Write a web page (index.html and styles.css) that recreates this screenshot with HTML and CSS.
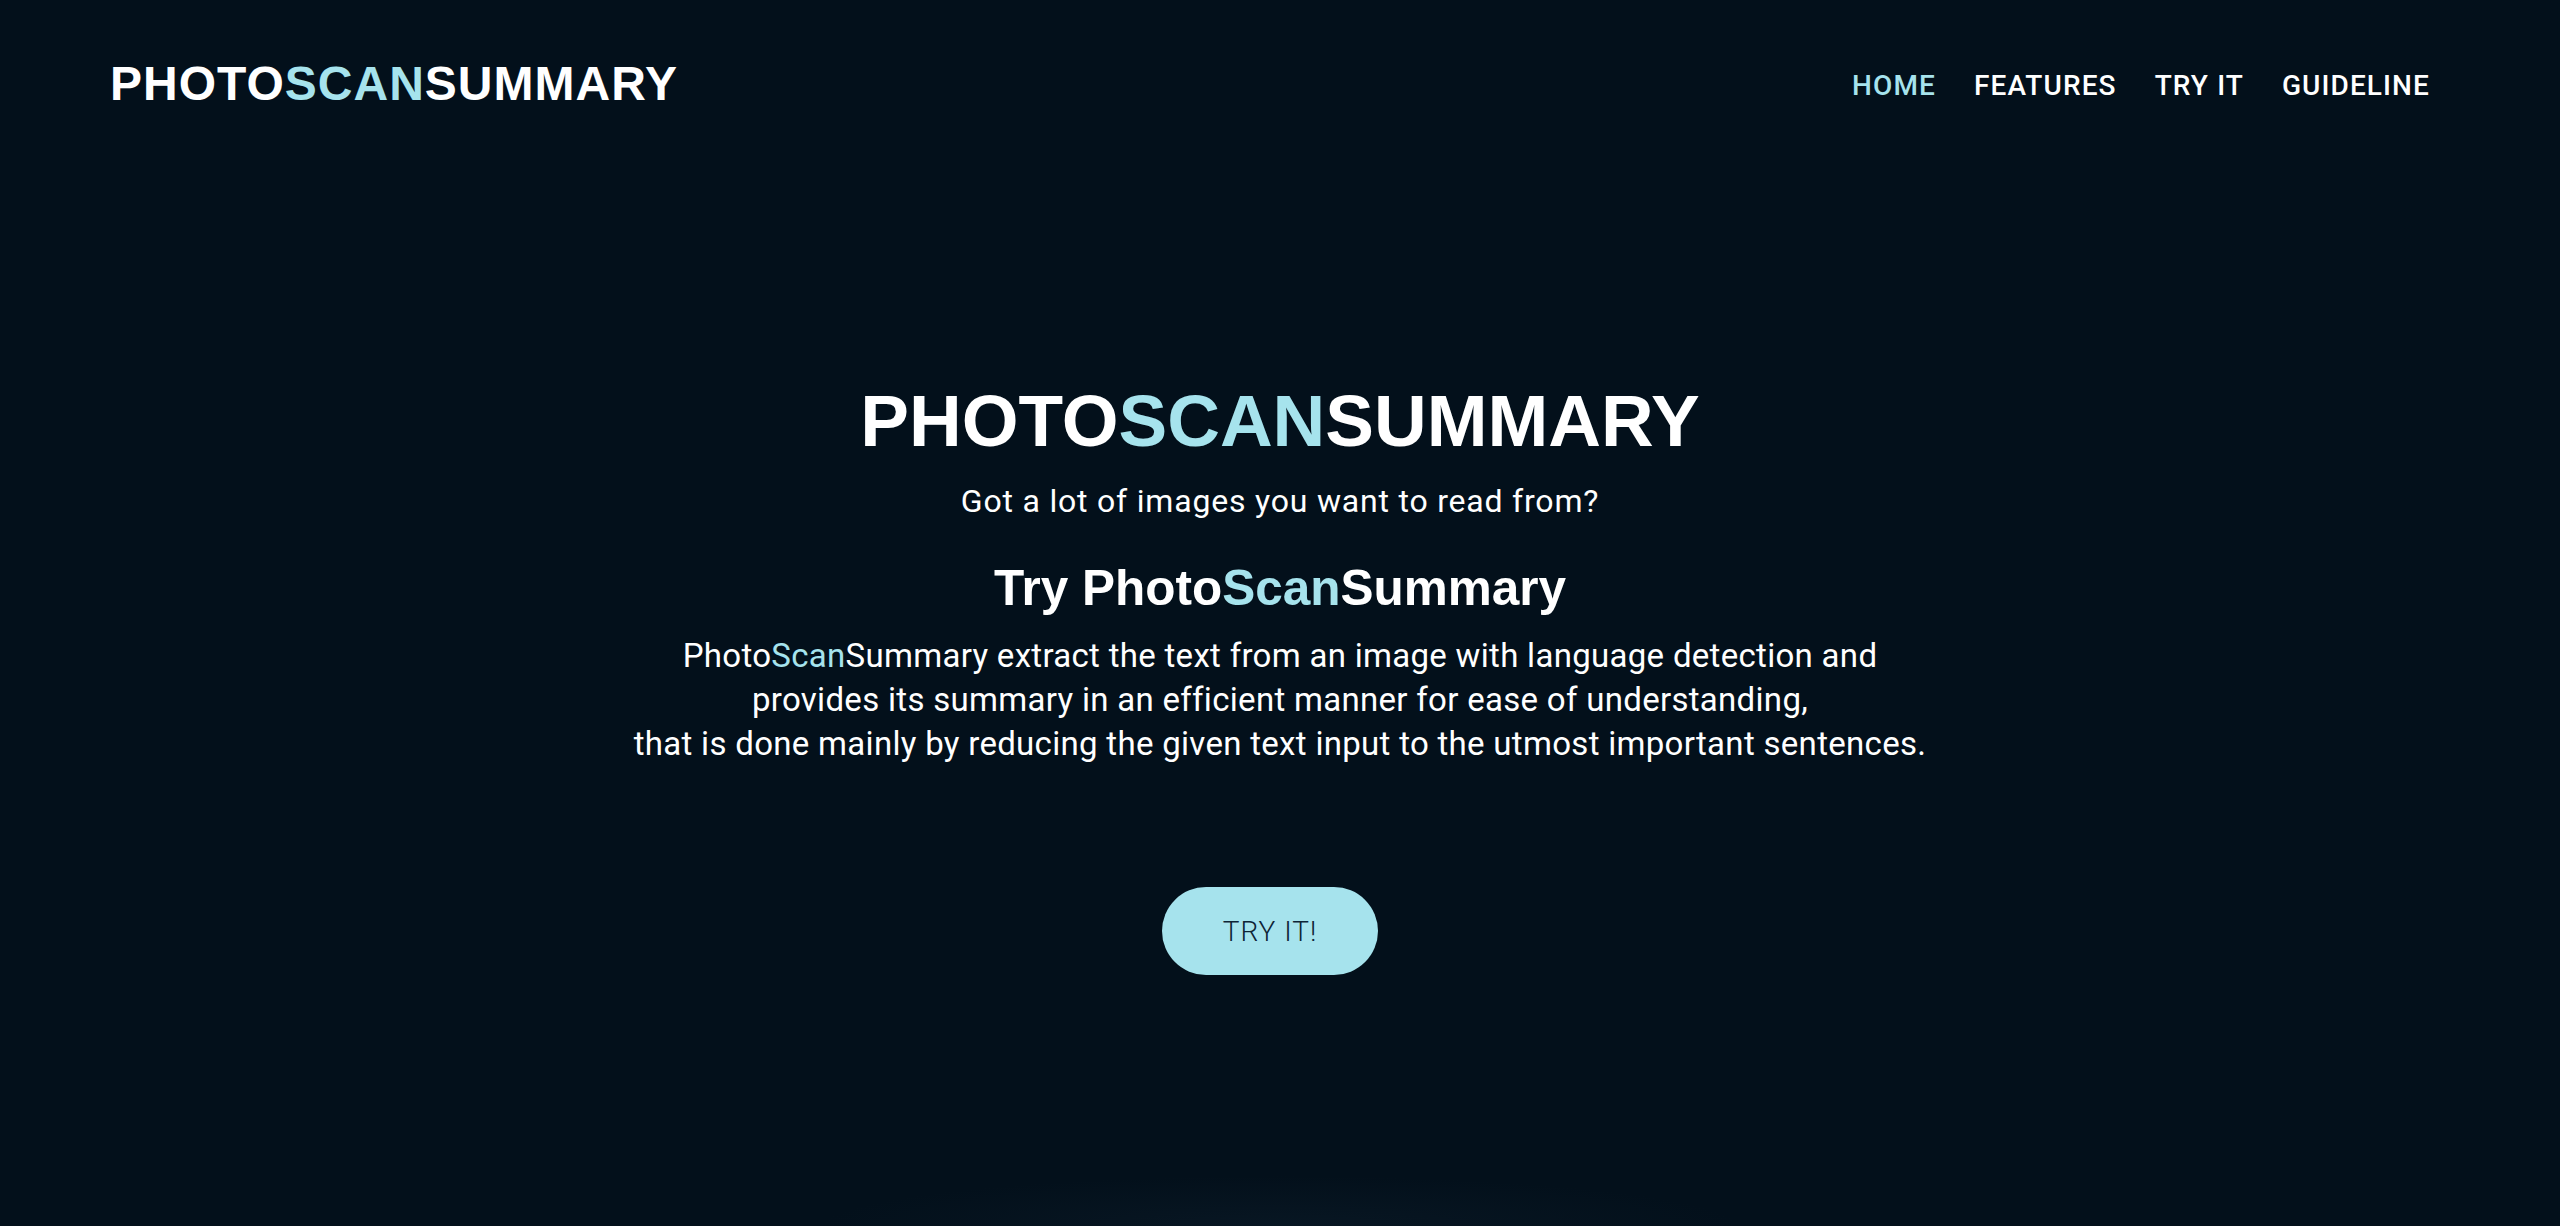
FILE: index.html
```html
<!DOCTYPE html>
<html lang="en">
<head>
<meta charset="utf-8">
<title>PhotoScanSummary</title>
<link rel="stylesheet" href="styles.css">
</head>
<body>
<div class="page">
  <header class="header">
    <a class="logo" href="#">PHOTO<span class="accent">SCAN</span>SUMMARY</a>
    <nav class="nav">
      <a class="nav-link active" href="#">HOME</a>
      <a class="nav-link" href="#">FEATURES</a>
      <a class="nav-link" href="#">TRY IT</a>
      <a class="nav-link" href="#">GUIDELINE</a>
    </nav>
  </header>
  <main class="hero">
    <h1 class="hero-title">PHOTO<span class="accent">SCAN</span>SUMMARY</h1>
    <p class="hero-sub">Got a lot of images you want to read from?</p>
    <h2 class="hero-heading">Try Photo<span class="accent">Scan</span>Summary</h2>
    <p class="hero-text">Photo<span class="accent">Scan</span>Summary extract the text from an image with language detection and<br>provides its summary in an efficient manner for ease of understanding,<br>that is done mainly by reducing the given text input to the utmost important sentences.</p>
    <a class="btn" href="#">TRY IT!</a>
  </main>
</div>
</body>
</html>
```
FILE: styles.css
```css
html, body {
  margin: 0;
  padding: 0;
  height: 100%;
}
body {
  background: #03101b;
  color: #ffffff;
  font-family: Roboto, "Noto Sans", sans-serif;
}
.page {
  min-height: 100vh;
  display: flex;
  flex-direction: column;
  background: radial-gradient(ellipse 460px 50px at 50% 100%, rgba(25, 45, 62, 0.22), rgba(3, 16, 27, 0));
}
.accent {
  color: #a6e3ed;
}
.header {
  display: flex;
  justify-content: space-between;
  align-items: flex-start;
  padding: 60px 130px 0 110px;
}
.logo {
  font-family: "Liberation Sans", Arial, sans-serif;
  font-weight: 700;
  font-size: 48px;
  line-height: 48px;
  letter-spacing: 1px;
  color: #ffffff;
  text-decoration: none;
}
.nav {
  display: flex;
  gap: 38px;
  margin-top: 12px;
}
.nav-link {
  font-family: Roboto, sans-serif;
  font-weight: 500;
  font-size: 28px;
  line-height: 28px;
  letter-spacing: 1.1px;
  color: #ffffff;
  text-decoration: none;
}
.nav-link.active {
  color: #a6e3ed;
}
.hero {
  display: flex;
  flex-direction: column;
  align-items: center;
  text-align: center;
  padding-top: 276px;
}
.hero-title {
  margin: 0;
  font-family: "Liberation Sans", Arial, sans-serif;
  font-weight: 700;
  font-size: 73px;
  line-height: 73px;
}
.hero-sub {
  margin: 28px 0 0;
  font-size: 32px;
  line-height: 32px;
  font-weight: 400;
  letter-spacing: 0.8px;
}
.hero-heading {
  margin: 46px 0 0;
  font-family: "Liberation Sans", Arial, sans-serif;
  font-weight: 700;
  font-size: 49.5px;
  line-height: 50px;
}
.hero-text {
  margin: 21px 0 0;
  font-size: 33px;
  line-height: 44px;
  font-weight: 400;
  letter-spacing: 0.3px;
}
.btn {
  margin: 121px 20px 0 0;
  width: 216px;
  height: 88px;
  border-radius: 44px;
  background: #a6e3ed;
  color: #0e2436;
  font-size: 28px;
  font-weight: 300;
  letter-spacing: 1px;
  text-decoration: none;
  display: flex;
  align-items: center;
  justify-content: center;
}
```
